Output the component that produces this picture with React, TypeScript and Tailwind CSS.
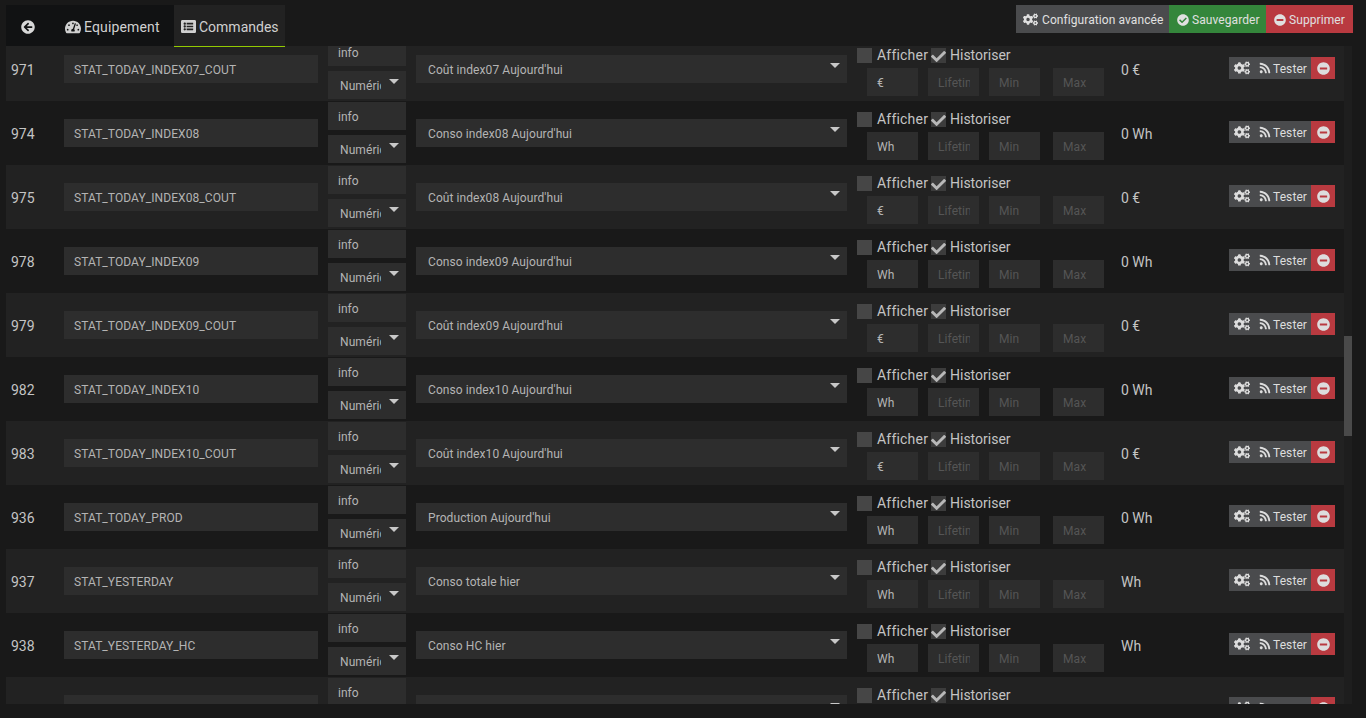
import React from 'react';
import { FaArrowCircleLeft, FaCheck, FaCheckCircle, FaCogs, FaListAlt, FaMinusCircle, FaRss, FaTachometerAlt } from 'react-icons/fa';

interface Cmd {
    id: number;
    logical: string;
    name: string;
    unit: string;
    value: string;
}

const cmds: Cmd[] = [
    { id: 971, logical: 'STAT_TODAY_INDEX07_COUT', name: "Coût index07 Aujourd'hui", unit: '€', value: '0 €' },
    { id: 974, logical: 'STAT_TODAY_INDEX08', name: "Conso index08 Aujourd'hui", unit: 'Wh', value: '0 Wh' },
    { id: 975, logical: 'STAT_TODAY_INDEX08_COUT', name: "Coût index08 Aujourd'hui", unit: '€', value: '0 €' },
    { id: 978, logical: 'STAT_TODAY_INDEX09', name: "Conso index09 Aujourd'hui", unit: 'Wh', value: '0 Wh' },
    { id: 979, logical: 'STAT_TODAY_INDEX09_COUT', name: "Coût index09 Aujourd'hui", unit: '€', value: '0 €' },
    { id: 982, logical: 'STAT_TODAY_INDEX10', name: "Conso index10 Aujourd'hui", unit: 'Wh', value: '0 Wh' },
    { id: 983, logical: 'STAT_TODAY_INDEX10_COUT', name: "Coût index10 Aujourd'hui", unit: '€', value: '0 €' },
    { id: 936, logical: 'STAT_TODAY_PROD', name: "Production Aujourd'hui", unit: 'Wh', value: '0 Wh' },
    { id: 937, logical: 'STAT_YESTERDAY', name: 'Conso totale hier', unit: 'Wh', value: 'Wh' },
    { id: 938, logical: 'STAT_YESTERDAY_HC', name: 'Conso HC hier', unit: 'Wh', value: 'Wh' },
    { id: 939, logical: 'STAT_YESTERDAY_HP', name: 'Conso HP hier', unit: 'Wh', value: 'Wh' },
];

const Arrow = () => (
    <span className="w-0 h-0 border-x-[5px] border-x-transparent border-t-[5px] border-t-[#c8c8c8]"></span>
);

const SmallInput = ({ value, placeholder, className }: { value?: string; placeholder?: string; className: string }) => (
    <input
        readOnly
        value={value ?? ''}
        placeholder={placeholder}
        className={`h-7 w-[51px] pl-[10px] pr-[9px] pt-[2px] bg-[#2d2d2d] text-xs tracking-[0.08px] text-[#b4b4b4] placeholder:text-[#555555] outline-none ${className}`}
    />
);

const Row = ({ cmd, odd }: { cmd: Cmd; odd: boolean }) => (
    <div className={`flex h-16 shrink-0 pl-[5px] ${odd ? 'bg-[#222222]' : 'bg-[#191919]'}`}>
        <div className="w-[53px] pt-px self-center text-sm text-[#c4c4c4]">{cmd.id}</div>
        <input
            readOnly
            value={cmd.logical}
            className="self-center h-7 w-[254px] px-[10px] pt-[2px] bg-[#2d2d2d] text-xs tracking-[0.08px] text-[#b4b4b4] outline-none"
        />
        <div className="ml-[10px] w-[78px] pt-px flex flex-col gap-[5px]">
            <div className="h-7 pl-[10px] pt-[2px] flex items-center bg-[#2d2d2d] text-xs text-[#b4b4b4]">info</div>
            <div className="h-7 pl-3 pr-[7px] flex items-center justify-between bg-[#2d2d2d] text-xs tracking-[0.08px] text-[#b4b4b4]">
                <span className="w-[41px] pt-[2px] overflow-hidden whitespace-nowrap">Numérique</span>
                <span className="flex pb-2"><Arrow /></span>
            </div>
        </div>
        <div className="ml-[10px] w-[431px] h-7 self-center pl-3 pr-[7px] flex items-center justify-between bg-[#2d2d2d] text-xs tracking-[0.08px] text-[#b4b4b4]">
            <span className="pt-px">{cmd.name}</span>
            <span className="flex pb-2"><Arrow /></span>
        </div>
        <div className="ml-[10px] w-[264px] pt-[10px]">
            <div className="flex items-center h-4 text-sm tracking-[0.2px] text-[#c4c4c4]">
                <span className="w-[15px] h-[15px] bg-[#464646]"></span>
                <span className="ml-[5px] w-[54px]">Afficher</span>
                <span className="w-[15px] h-[15px] pt-[2px] bg-[#3c3c3c] flex items-center justify-center text-[#b8b8b8]">
                    <FaCheck size={15} />
                </span>
                <span className="ml-1 tracking-normal">Historiser</span>
            </div>
            <div className="mt-[5px] ml-[10px] flex">
                <SmallInput value={cmd.unit} className="" />
                <SmallInput placeholder="Lifetime" className="ml-[10px]" />
                <SmallInput placeholder="Min" className="ml-[10px]" />
                <SmallInput placeholder="Max" className="ml-[13px]" />
            </div>
        </div>
        <div className="w-[108px] pt-px self-center text-sm text-[#c4c4c4]">{cmd.value}</div>
        <div className="self-center mb-[2px] flex h-[22px] text-xs tracking-[0.08px] text-[#dddddd]">
            <span className="w-[26px] pl-[5px] flex items-center bg-[#4a4b4d]"><FaCogs size={16} /></span>
            <span className="w-[56px] pl-[4px] flex items-center gap-[2px] bg-[#4a4b4d]"><FaRss size={12} /><span className="pt-[2px]">Tester</span></span>
            <span className="w-6 flex items-center justify-center bg-[#b93a40]"><FaMinusCircle size={13} /></span>
        </div>
    </div>
);

const App: React.FC = () => {
    return (
        <div className="h-[718px] overflow-hidden bg-[#191919] font-['Roboto',sans-serif]">
            <div className="relative z-10 h-[46px] pl-[6px] pr-[13px] pt-[5px] flex justify-between">
                <div className="flex h-[42px] text-sm tracking-[0.15px] text-[#d0d0d0]">
                    <div className="w-[168px] h-[41px] pt-[2px] flex items-center bg-[#111213]">
                        <span className="ml-[15px] text-[#d8d8d8]"><FaArrowCircleLeft size={14} /></span>
                        <span className="ml-[30px] flex items-center gap-[3px]"><FaTachometerAlt size={16} />Equipement</span>
                    </div>
                    <div className="w-[111px] pl-[7px] pt-[2px] flex items-center gap-[3px] bg-[#222222] border-b border-[#93ca02] tracking-normal">
                        <FaListAlt size={15} />Commandes
                    </div>
                </div>
                <div className="flex h-7 text-xs tracking-[0.08px] text-[#e0e0e0]">
                    <div className="w-[153px] pt-px pl-[7px] flex items-center gap-[4px] bg-[#4a4b4d]"><FaCogs size={15} />Configuration avancée</div>
                    <div className="w-[97px] pt-px pl-[8px] flex items-center gap-[3px] bg-[#34863b]"><FaCheckCircle size={12} />Sauvegarder</div>
                    <div className="w-[87px] pt-px pl-[8px] flex items-center gap-[3px] bg-[#b93a40]"><FaMinusCircle size={12} />Supprimer</div>
                </div>
            </div>
            <div className="h-[658px] ml-[6px] flex overflow-hidden">
                <div className="w-[1338px] -mt-[9px] flex flex-col">
                    {cmds.map((cmd, i) => <Row key={cmd.id} cmd={cmd} odd={i % 2 === 0} />)}
                </div>
                <div className="w-2 pt-[290px] bg-[#1e1e1e]">
                    <div className="h-[100px] bg-[#4a4a4a]"></div>
                </div>
            </div>
        </div>
    );
};

export default App;
